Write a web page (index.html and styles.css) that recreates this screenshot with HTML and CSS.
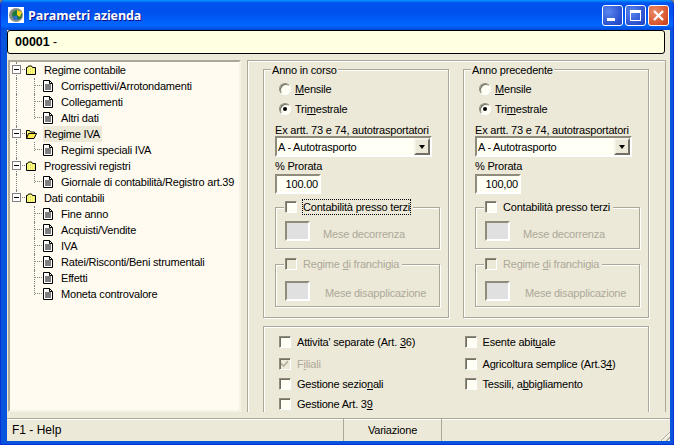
FILE: index.html
```html
<!DOCTYPE html>
<html lang="en">
<head>
  <meta charset="UTF-8" />
  <title>Parametri azienda</title>
  <link rel="stylesheet" href="styles.css">
</head>
<body>
  <svg class="defs" width="0" height="0">
    <defs>
      <symbol id="box" viewBox="0 0 9 9">
        <rect x=".5" y=".5" width="8" height="8" fill="#fff" stroke="#808080"/>
        <path d="M2 4.5h5" stroke="#000"/>
      </symbol>
      <symbol id="folder" viewBox="0 0 12 12">
        <path d="M1.500 10.500v-7h1l1-1.500h3l1 1.500h3v7z" fill="#ffff80" stroke="#000"/>
        <path d="M3 5h7M3 7h7M3 9h7" stroke="#d8d060" stroke-dasharray="1 1"/>
      </symbol>
      <symbol id="folder-open" viewBox="0 0 12 12">
        <path d="M1.500 10.500v-8h3l1 1.500h4v2" fill="#ffff80" stroke="#000"/>
        <path d="M1.500 10.500l2-5h8l-2.500 5z" fill="#ffe94c" stroke="#000"/>
      </symbol>
      <symbol id="doc" viewBox="0 0 10 12">
        <path d="M.5.5h6l3 3v8h-9z" fill="#fff" stroke="#000"/>
        <path d="M6.500.5v3h3M2 5h6M2 7h6M2 9h6" fill="none" stroke="#000"/>
      </symbol>
      <symbol id="tick" viewBox="0 0 9 9">
        <path d="M1 3.500l2.500 2.500 4.500-4.500v2l-4.500 4.500-2.500-2.500z" fill="#aca899"/>
      </symbol>
    </defs>
  </svg>

  <div class="window">
    <div class="titlebar">
      <svg class="app-icon" width="16" height="16" viewBox="0 0 16 16">
        <rect width="16" height="16" fill="#fff"/>
        <circle cx="8" cy="8" r="7" fill="#8a8f8a"/>
        <circle cx="9" cy="8" r="5" fill="#1f7a3a"/>
        <path d="M9 3l5 2-2 5-3-2z" fill="#f2d21e"/>
        <path d="M5 9l4 0 1 4-4 0z" fill="#2f6fd0"/>
      </svg>
      <span class="title-text">Parametri azienda</span>
      <div class="caption-btns">
        <div class="cap-btn"><span class="glyph-min"></span></div>
        <div class="cap-btn"><span class="glyph-max"></span></div>
        <div class="cap-btn close">
          <svg width="13" height="13" viewBox="0 0 13 13"><path d="M2 2l9 9M11 2l-9 9" stroke="#fff" stroke-width="2.400"/></svg>
        </div>
      </div>
    </div>

    <div class="client">
      <div class="company"><b>00001</b>&nbsp;-</div>

      <div class="main">
        <div class="tree">
          <div class="node root trunk"><span class="toggle"><svg width="9" height="9"><use href="#box"/></svg></span><svg class="ico" width="12" height="12"><use href="#folder"/></svg><span class="lbl">Regime contabile</span></div>
          <div class="node leaf trunk"><svg class="ico" width="10" height="12"><use href="#doc"/></svg><span class="lbl">Corrispettivi/Arrotondamenti</span></div>
          <div class="node leaf trunk"><svg class="ico" width="10" height="12"><use href="#doc"/></svg><span class="lbl">Collegamenti</span></div>
          <div class="node leaf trunk last"><svg class="ico" width="10" height="12"><use href="#doc"/></svg><span class="lbl">Altri dati</span></div>
          <div class="node root trunk"><span class="toggle"><svg width="9" height="9"><use href="#box"/></svg></span><svg class="ico" width="12" height="12"><use href="#folder-open"/></svg><span class="lbl sel">Regime IVA</span></div>
          <div class="node leaf trunk last"><svg class="ico" width="10" height="12"><use href="#doc"/></svg><span class="lbl">Regimi speciali IVA</span></div>
          <div class="node root trunk"><span class="toggle"><svg width="9" height="9"><use href="#box"/></svg></span><svg class="ico" width="12" height="12"><use href="#folder"/></svg><span class="lbl">Progressivi registri</span></div>
          <div class="node leaf trunk last"><svg class="ico" width="10" height="12"><use href="#doc"/></svg><span class="lbl">Giornale di contabilità/Registro art.39</span></div>
          <div class="node root end"><span class="toggle"><svg width="9" height="9"><use href="#box"/></svg></span><svg class="ico" width="12" height="12"><use href="#folder"/></svg><span class="lbl">Dati contabili</span></div>
          <div class="node leaf"><svg class="ico" width="10" height="12"><use href="#doc"/></svg><span class="lbl">Fine anno</span></div>
          <div class="node leaf"><svg class="ico" width="10" height="12"><use href="#doc"/></svg><span class="lbl">Acquisti/Vendite</span></div>
          <div class="node leaf"><svg class="ico" width="10" height="12"><use href="#doc"/></svg><span class="lbl">IVA</span></div>
          <div class="node leaf"><svg class="ico" width="10" height="12"><use href="#doc"/></svg><span class="lbl">Ratei/Risconti/Beni strumentali</span></div>
          <div class="node leaf"><svg class="ico" width="10" height="12"><use href="#doc"/></svg><span class="lbl">Effetti</span></div>
          <div class="node leaf last"><svg class="ico" width="10" height="12"><use href="#doc"/></svg><span class="lbl">Moneta controvalore</span></div>
        </div>

        <div class="panel">
          <div class="years">
            <div class="group year">
              <div class="legend">Anno in corso</div>
              <div class="radio-row"><span class="radio"></span><span><u>M</u>ensile</span></div>
              <div class="radio-row"><span class="radio on"></span><span>Tri<u>m</u>estrale</span></div>
              <div class="field-lbl">Ex artt. 73 e 74, autotrasportatori</div>
              <div class="combo"><span class="combo-val">A - Autotrasporto</span><span class="combo-btn"></span></div>
              <div class="field-lbl prorata">% Prorata</div>
              <div class="num">100.00</div>
              <div class="group sub first">
                <div class="legend chk-legend"><span class="check"></span><span class="focus">Contabilità presso terzi</span></div>
                <div class="sub-row"><span class="month"></span><span class="off dec">Mese decorrenza</span></div>
              </div>
              <div class="group sub second">
                <div class="legend chk-legend"><span class="check dis"></span><span class="off plain">Regime <u>d</u>i franchigia</span></div>
                <div class="sub-row"><span class="month"></span><span class="off dis-lbl">Mese disapplicazione</span></div>
              </div>
            </div>

            <div class="group year">
              <div class="legend">Anno precedente</div>
              <div class="radio-row"><span class="radio"></span><span><u>M</u>ensile</span></div>
              <div class="radio-row"><span class="radio on"></span><span>Tri<u>m</u>estrale</span></div>
              <div class="field-lbl">Ex artt. 73 e 74, autotrasportatori</div>
              <div class="combo"><span class="combo-val">A - Autotrasporto</span><span class="combo-btn"></span></div>
              <div class="field-lbl prorata">% Prorata</div>
              <div class="num">100,00</div>
              <div class="group sub first">
                <div class="legend chk-legend"><span class="check"></span><span class="plain">Contabilità presso terzi</span></div>
                <div class="sub-row"><span class="month"></span><span class="off dec">Mese decorrenza</span></div>
              </div>
              <div class="group sub second">
                <div class="legend chk-legend"><span class="check dis"></span><span class="off plain">Regime <u>d</u>i franchigia</span></div>
                <div class="sub-row"><span class="month"></span><span class="off dis-lbl">Mese disapplicazione</span></div>
              </div>
            </div>
          </div>

          <div class="group flags">
            <div class="flag-col">
              <div class="flag"><span class="check"></span><span>Attivita' separate (Art. <u>3</u>6)</span></div>
              <div class="flag"><span class="check dis"><svg width="9" height="9"><use href="#tick"/></svg></span><span class="off">F<u>i</u>liali</span></div>
              <div class="flag"><span class="check"></span><span>Gestione sezio<u>n</u>ali</span></div>
              <div class="flag"><span class="check"></span><span>Gestione Art. 3<u>9</u></span></div>
            </div>
            <div class="flag-col">
              <div class="flag"><span class="check"></span><span>Esente abit<u>u</u>ale</span></div>
              <div class="flag"><span class="check"></span><span>Agricoltura semplice (Art.3<u>4</u>)</span></div>
              <div class="flag"><span class="check"></span><span>Tessili, a<u>b</u>bigliamento</span></div>
            </div>
          </div>
        </div>
      </div>

      <div class="status">
        <div class="st-help">F1 - Help</div>
        <div class="st-mode">Variazione</div>
        <div class="st-rest"><span class="grip"></span></div>
      </div>
    </div>
  </div>
</body>
</html>
```

FILE: styles.css
```css
/* XP style dialog */
html, body {
  margin: 0;
  padding: 0;
}

body {
  width: 674px;
  height: 445px;
  overflow: hidden;
  background: #808080;
  font-family: "Liberation Sans", Arial, sans-serif;
  font-size: 11px;
  letter-spacing: -0.2px;
  color: #000;
}

.defs {
  display: block;
  height: 0;
}

.window {
  width: 674px;
  height: 445px;
  display: flex;
  flex-direction: column;
  box-sizing: border-box;
  background: #0855dd;
  border-radius: 5px 5px 0 0;
  overflow: hidden;
  border: 1px solid #0831d9;
  border-top: 0;
}

.titlebar {
  height: 30px;
  flex: none;
  display: flex;
  align-items: center;
  padding: 0 4px 0 7px;
  background: linear-gradient(to bottom, #0997ff 0, #0053ee 10%, #0050ee 40%, #0066ff 85%, #0048d8 100%);
}

.app-icon {
  margin: 0 4px 0 0;
}

.title-text {
  font-family: "Open Sans", sans-serif;
  font-weight: 700;
  font-size: 12.500px;
  letter-spacing: -0.1px;
  margin-top: 1px;
  color: #fff;
  text-shadow: 1px 1px 0 #0f1089;
}

.caption-btns {
  margin-left: auto;
  display: flex;
  gap: 2px;
}

.cap-btn {
  width: 21px;
  height: 21px;
  box-sizing: border-box;
  border: 1px solid #fff;
  border-radius: 3px;
  background: radial-gradient(circle at 30% 30%, #5a87ee, #2a50d0 70%, #1c3fc0);
  display: flex;
  align-items: center;
  justify-content: center;
}

.cap-btn.close {
  background: radial-gradient(circle at 30% 30%, #eb8a68, #d8532c 70%, #b93a14);
}

.glyph-min {
  width: 8px;
  height: 3px;
  background: #fff;
  margin: 9px 4px 0 0;
}

.glyph-max {
  width: 9px;
  height: 7px;
  border: 1px solid #fff;
  border-top-width: 3px;
}

.client {
  flex: 1;
  display: flex;
  flex-direction: column;
  margin: 0 3px 3px 6px;
  background: #ece9d8;
  min-height: 0;
}

.company {
  height: 24px;
  box-sizing: border-box;
  width: 658px;
  flex: none;
  display: flex;
  align-items: center;
  padding-left: 7px;
  background: #ffffe1;
  border: 1px solid #000;
  border-radius: 3px;
  font-size: 12px;
  letter-spacing: 0;
  white-space: pre;
}

.company b {
  font-size: 12.500px;
}

.main {
  flex: 1;
  display: flex;
  min-height: 0;
  padding-top: 6px;
  gap: 6px;
  height: 358px;
}

.tree {
  width: 233px;
  height: 352px;
  box-sizing: border-box;
  margin-left: 1px;
  background: #fffbf0;
  border: 2px solid;
  border-color: #aca899 #f5f3e8 #f5f3e8 #aca899;
}

.node {
  height: 16px;
  display: flex;
  align-items: center;
  position: relative;
  white-space: nowrap;
}

.node.root {
  padding-left: 15px;
  background: repeating-linear-gradient(to right, #808080 0 1px, transparent 1px 2px) 6px 7px / 10px 1px no-repeat;
}

.node.leaf {
  padding-left: 33px;
}

/* dotted tree guides */
.node.trunk::before {
  content: "";
  position: absolute;
  left: 6px;
  top: 0;
  bottom: 0;
  border-left: 1px dotted #808080;
}

.node.end::before {
  content: "";
  position: absolute;
  left: 6px;
  top: 0;
  height: 8px;
  border-left: 1px dotted #808080;
}

.node.leaf::after {
  content: "";
  position: absolute;
  left: 24px;
  top: 0;
  bottom: 0;
  width: 9px;
  border-left: 1px dotted #808080;
  background: repeating-linear-gradient(to right, #808080 0 1px, transparent 1px 2px) 0 7px / 9px 1px no-repeat;
}

.node.leaf.last::after {
  bottom: 7px;
}

.toggle {
  position: absolute;
  left: 2px;
  top: 3px;
  height: 9px;
  z-index: 1;
  line-height: 0;
}

.ico {
  flex: none;
  z-index: 1;
}

.lbl {
  margin-left: 7px;
  line-height: 16px;
  padding: 0 2px 0 1px;
}

.node.root .lbl {
  margin-left: 6px;
}

.lbl.sel {
  background: #ece9d8;
}

.panel {
  width: 419px;
  height: 352px;
  box-sizing: border-box;
  overflow: hidden;
  padding: 8px 16px 0 15px;
  border: 1px solid #aca899;
  border-bottom: 0;
  box-shadow: inset 1px 1px 0 #fff;
}

.years {
  display: flex;
  gap: 14px;
}

.group {
  box-sizing: border-box;
  border: 1px solid #aca899;
  box-shadow: inset 1px 1px 0 #fff, 1px 1px 0 #fff;
}

.year {
  width: 186px;
  height: 249px;
  padding: 0 8px 0 11px;
}

.legend {
  background: #ece9d8;
  width: fit-content;
  margin: -7px 0 0 -4px;
  padding: 0 1px;
  height: 14px;
  line-height: 14px;
}

.radio-row {
  display: flex;
  align-items: center;
  height: 20px;
  padding-left: 4px;
  gap: 4px;
}

.radio-row:nth-child(2) {
  margin-top: 2px;
}

.radio {
  width: 12px;
  height: 12px;
  box-sizing: border-box;
  border-radius: 50%;
  border: 1px solid #8f8c7c;
  border-right-color: #fff;
  border-bottom-color: #fff;
  background: #fffff5;
  box-shadow: inset 1px 1px 0 #716f64;
  position: relative;
}

.radio.on::after {
  content: "";
  position: absolute;
  left: 3px;
  top: 3px;
  width: 4px;
  height: 4px;
  border-radius: 50%;
  background: #000;
}

.field-lbl {
  height: 14px;
  line-height: 14px;
  margin-top: 4px;
  white-space: nowrap;
}

.combo {
  width: 157px;
  height: 21px;
  box-sizing: border-box;
  margin-top: -1px;
  border: 2px solid;
  border-color: #8f8c7c #fff #fff #8f8c7c;
  background: #fffff5;
  display: flex;
  align-items: center;
}

.combo-val {
  flex: 1;
  padding-left: 1px;
}

.combo-btn {
  width: 16px;
  height: 17px;
  box-sizing: border-box;
  border: 2px solid;
  border-color: #f5f3e8 #716f64 #716f64 #f5f3e8;
  background: #ece9d8;
  display: flex;
  align-items: center;
  justify-content: center;
}

.combo-btn::after {
  content: "";
  border: 3.500px solid transparent;
  border-top: 4px solid #000;
  border-bottom: 0;
}

.field-lbl.prorata {
  margin-top: 2px;
}

.num {
  width: 46px;
  height: 20px;
  box-sizing: border-box;
  margin-top: 1px;
  border: 2px solid;
  border-color: #8f8c7c #fff #fff #8f8c7c;
  background: #fffff5;
  text-align: right;
  line-height: 16px;
  padding-right: 1px;
}

.sub {
  width: 165px;
  height: 42px;
  padding: 0 0 0 9px;
}

.sub.first {
  margin-top: 13px;
}

.sub.second {
  height: 43px;
  margin-top: 15px;
}

.chk-legend {
  display: flex;
  align-items: center;
  margin: -8px 0 0 -1px;
  gap: 4px;
  padding-right: 3px;
}

.check {
  width: 12px;
  height: 12px;
  box-sizing: border-box;
  flex: none;
  border: 1px solid #8f8c7c;
  border-right-color: #fff;
  border-bottom-color: #fff;
  background: #fffff5;
  box-shadow: inset 1px 1px 0 #716f64;
  line-height: 0;
}

.check.dis {
  background: #ece9d8;
}

.focus {
  outline: 1px dotted #000;
  margin-left: 2px;
}

.plain {
  padding-left: 2px;
}

.off {
  color: #aca899;
}

.sub-row {
  display: flex;
  align-items: center;
}

.first .sub-row {
  margin-top: 7px;
}

.second .sub-row {
  margin-top: 10px;
}

.month {
  width: 25px;
  height: 20px;
  box-sizing: border-box;
  flex: none;
  border: 2px solid;
  border-color: #8f8c7c #fff #fff #8f8c7c;
  background: #e0e0e0;
}

.dec {
  margin: 6px 0 0 13px;
}

.dis-lbl {
  margin: 4px 0 0 15px;
}

.flags {
  margin-top: 8px;
  width: 386px;
  height: 100px;
  display: flex;
  padding: 5px 0 0 15px;
}

.flag-col {
  width: 187px;
}

.flag-col + .flag-col .flag {
  gap: 6px;
  margin-left: 1px;
}

.flag {
  display: flex;
  align-items: center;
  gap: 6px;
  height: 20px;
}

.flag:nth-child(2) {
  margin-top: 2px;
}

.status {
  height: 22px;
  flex: none;
  margin-top: 7px;
  display: flex;
  align-items: stretch;
  border-top: 1px solid #aca899;
  box-shadow: inset 0 1px 0 #fff;
}

.st-help {
  width: 336px;
  padding-left: 5px;
  line-height: 22px;
  box-sizing: border-box;
  font-size: 12px;
  letter-spacing: 0;
}

.st-mode {
  width: 99px;
  text-align: center;
  line-height: 22px;
  border-left: 1px solid #aca899;
  border-right: 1px solid #aca899;
  box-sizing: border-box;
}

.st-rest {
  flex: 1;
  position: relative;
}

.grip {
  position: absolute;
  right: 0;
  bottom: 0;
  width: 12px;
  height: 12px;
  background: repeating-linear-gradient(135deg, transparent 0 2px, #aca899 2px 3px, #fff 3px 4px);
  clip-path: polygon(100% 0, 100% 100%, 0 100%);
}
```
